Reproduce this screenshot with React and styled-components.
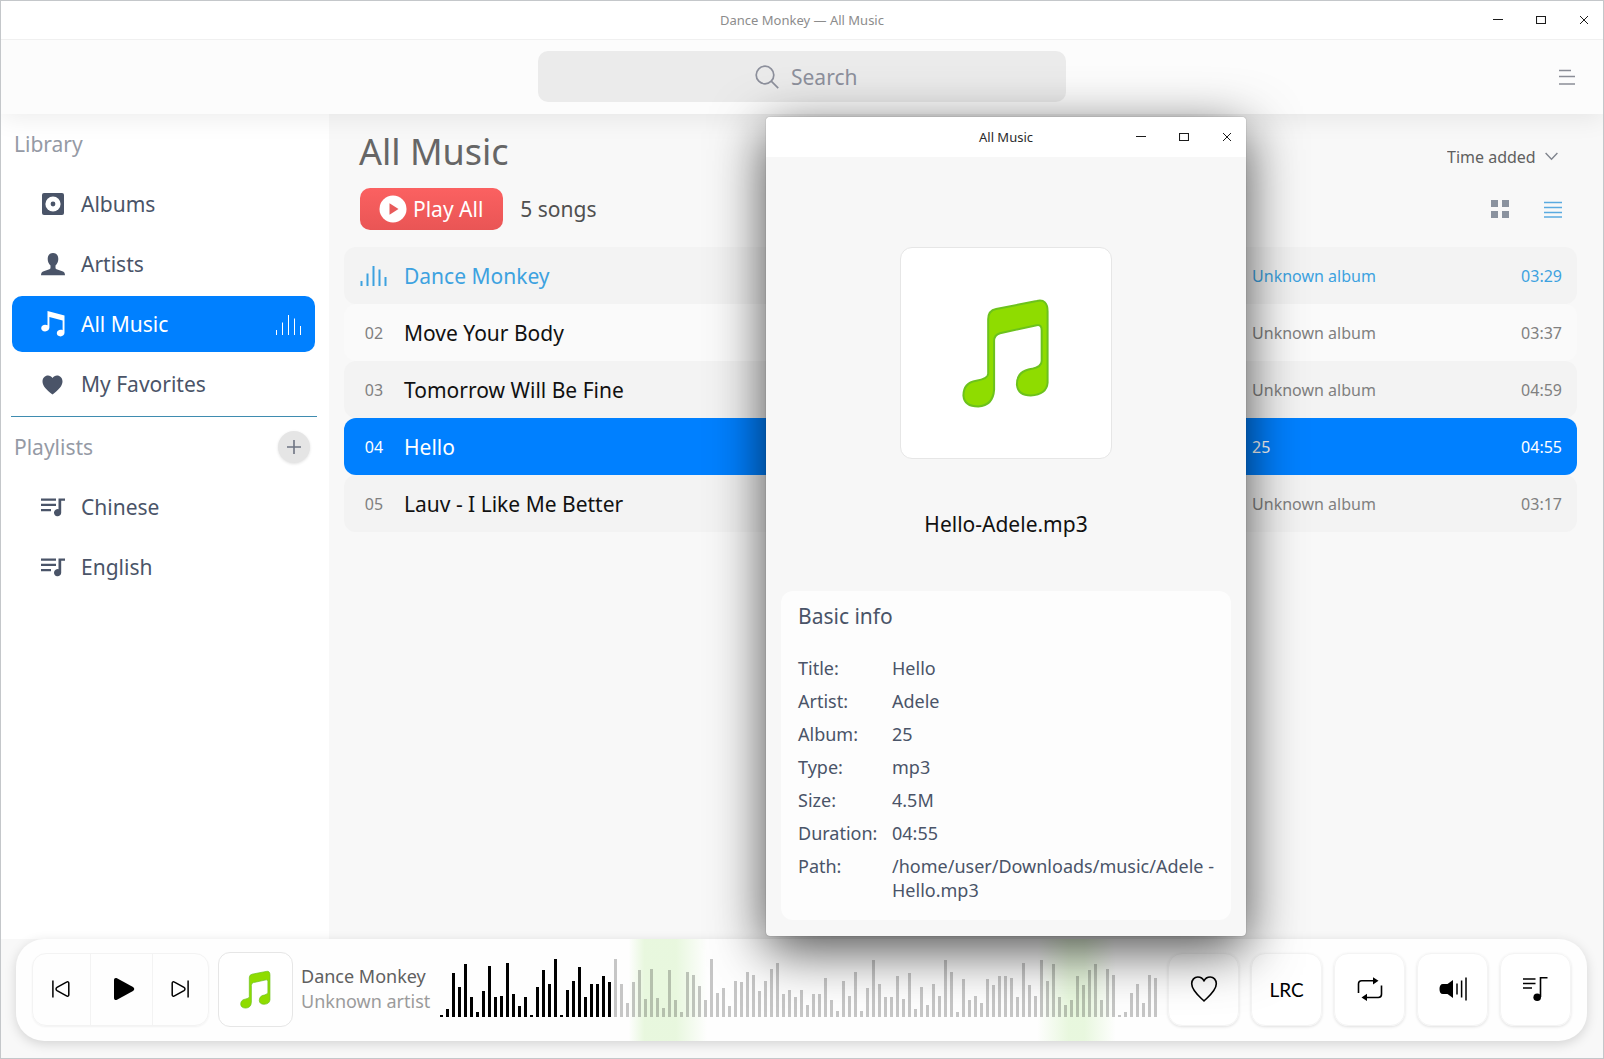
import React, { useState } from "react";
import styled, { createGlobalStyle, css } from "styled-components";

const GlobalStyle = createGlobalStyle`
  *, *::before, *::after { box-sizing: border-box; }
  body { margin: 0; background: #f8f8f8; }
  body, button, input, select { font-family: "Noto Sans", "Open Sans", sans-serif; }
  h1, h2, p, dl, dd, ul { margin: 0; padding: 0; font-weight: 400; }
  ul { list-style: none; }
  svg { display: block; flex: none; }
`;

const slate = "#4a5468";
const accent = "#0080ff";
const playing = "#3da2e0";

/* ---------- window ---------- */

const Window = styled.div`
  position: relative;
  display: flex;
  flex-direction: column;
  min-height: 100vh;
  border: 1px solid #c4c7ca;
  background: #f8f8f8;
`;

const TitleBar = styled.header`
  display: grid;
  grid-template-columns: 1fr auto 1fr;
  align-items: center;
  height: ${(p) => (p.$dialog ? 40 : 39)}px;
  padding-bottom: ${(p) => (p.$dialog ? 0 : 1)}px;
  background: #fff;
  border-bottom: 1px solid ${(p) => (p.$dialog ? "#fff" : "#f0f0f0")};
  border-radius: ${(p) => (p.$dialog ? "4px 4px 0 0" : "0")};
`;

const WindowTitle = styled.p`
  grid-column: 2;
  font-size: 13px;
  line-height: 20px;
  color: ${(p) => (p.$active ? "#2b2b2b" : "#8c8c8c")};
`;

const WindowControls = styled.div`
  display: flex;
  justify-content: flex-end;
  gap: 15px;
  padding-right: 5px;
`;

const PlainButton = styled.button`
  display: flex;
  align-items: center;
  justify-content: center;
  padding: 0;
  border: 0;
  background: none;
  color: inherit;
  cursor: pointer;
`;

const ControlButton = styled(PlainButton)`
  width: 28px;
  height: 28px;
  color: #1c1c1c;
`;

const Header = styled.div`
  position: relative;
  z-index: 1;
  display: grid;
  grid-template-columns: 1fr minmax(280px, 33%) 1fr;
  align-items: center;
  height: 74px;
  padding-bottom: 1px;
  background: #fcfcfc;
  box-shadow: 0 4px 26px rgba(0, 0, 0, 0.08);
  clip-path: inset(0 0 -40px 0);
`;

const SearchBox = styled.label`
  grid-column: 2;
  display: flex;
  align-items: center;
  justify-content: center;
  gap: 12px;
  height: 51px;
  padding-left: 18px;
  border-radius: 10px;
  background: #ebebeb;
  color: #8d909c;
`;

const SearchInput = styled.input`
  width: 76px;
  padding: 0;
  border: 0;
  outline: 0;
  background: transparent;
  font-size: 21px;
  line-height: 30px;
  color: ${slate};
  &::placeholder { color: #8d909c; opacity: 1; }
`;

const MenuButton = styled(PlainButton)`
  justify-self: end;
  width: 32px;
  height: 32px;
  margin-right: 20px;
  color: #8a8d96;
`;

const Body = styled.div`
  flex: 1;
  display: grid;
  grid-template-columns: 328px 1fr;
`;

/* ---------- sidebar ---------- */

const Sidebar = styled.nav`
  background: #fff;
`;

const SectionHead = styled.div`
  display: flex;
  align-items: center;
  justify-content: space-between;
  height: 62px;
  padding: 0 19px 2px 13px;
`;

const SectionLabel = styled.h2`
  font-size: 21px;
  line-height: 30px;
  color: #959aa5;
`;

const NavList = styled.ul`
  display: flex;
  flex-direction: column;
  gap: 4px;
  padding: 0 14px 4px 11px;
`;

const NavLink = styled.a`
  display: flex;
  align-items: center;
  gap: 16px;
  height: 56px;
  padding: 0 12px 0 29px;
  border-radius: 10px;
  font-size: 21px;
  line-height: 30px;
  text-decoration: none;
  color: ${(p) => (p.$active ? "#fff" : slate)};
  background: ${(p) => (p.$active ? accent : "transparent")};
`;

const NavText = styled.span`
  flex: 1;
`;

const Divider = styled.hr`
  height: 1px;
  margin: 0 12px 0 10px;
  border: 0;
  background: #3f8cb0;
`;

const AddButton = styled(PlainButton)`
  width: 32px;
  height: 32px;
  border-radius: 50%;
  background: #e5e5e5;
  color: #6e7482;
  box-shadow: 0 1px 3px rgba(0, 0, 0, 0.12);
`;

/* ---------- content ---------- */

const Content = styled.main`
  padding: 13px 26px 0 15px;
`;

const HeadRow = styled.div`
  display: flex;
  align-items: flex-start;
  justify-content: space-between;
  padding: 0 19px 0 15px;
`;

const ActionRow = styled.div`
  display: flex;
  align-items: center;
  gap: 17px;
  margin: 11px 0 17px;
  padding: 0 15px 0 16px;
`;

const PageTitle = styled.h1`
  font-size: 36px;
  line-height: 50px;
  color: #666;
`;

const SortBox = styled.div`
  display: flex;
  position: relative;
  margin-top: 13px;
  color: #80858e;
`;

const SortSelect = styled.select`
  appearance: none;
  height: 34px;
  padding: 0 22px 0 0;
  border: 0;
  background: transparent;
  font-size: 16px;
  color: #606060;
`;

const SortArrow = styled.span`
  position: absolute;
  right: 0;
  top: 12px;
  pointer-events: none;
`;

const PlayAll = styled(PlainButton)`
  gap: 6px;
  height: 42px;
  padding: 0 20px 0 19px;
  border-radius: 10px;
  background: linear-gradient(#fb6161, #e95555);
  font-size: 21px;
  color: #fff;
`;

const SongCount = styled.p`
  flex: 1;
  font-size: 21px;
  line-height: 30px;
  color: #505050;
`;

const ViewButton = styled(PlainButton)`
  height: 34px;
  margin-left: 18px;
  color: ${(p) => (p.$active ? "#5aaae0" : "#8a929e")};
`;

const SongTable = styled.table`
  width: 100%;
  table-layout: fixed;
  border-collapse: separate;
  border-spacing: 0;
`;

const Col = styled.col`
  width: ${(p) => p.$w};
`;

const Cell = styled.td`
  height: 57px;
  padding: 0;
  font-size: ${(p) => (p.$title ? 21 : 16)}px;
  text-align: ${(p) => p.$align || "left"};
  &:first-child { border-radius: 12px 0 0 12px; }
  &:last-child { padding-right: 15px; border-radius: 0 12px 12px 0; }
  svg { margin: 0 auto; }
`;

const SongRow = styled.tr`
  color: #808080;
  background: transparent;
  ${Cell} { background: #fafafa; }
  &:nth-child(odd) ${Cell} { background: #f3f3f3; }
  ${Cell}:nth-child(2) { color: #111; }
  ${(p) => p.$playing && css`
    &&, && ${Cell}:nth-child(2) { color: ${playing}; }
  `}
  ${(p) => p.$selected && css`
    &&, && ${Cell}:nth-child(2) { color: #fff; }
    && ${Cell} { background: ${accent}; }
  `}
`;

/* ---------- player ---------- */

const Player = styled.footer`
  display: flex;
  align-items: center;
  height: 102px;
  margin: 0 16px 17px 15px;
  padding: 0 16px 2px;
  border-radius: 28px;
  background:
    linear-gradient(90deg, transparent 39%, rgba(214, 242, 196, 0.55) 40%, rgba(214, 242, 196, 0.55) 42%, transparent 44%),
    linear-gradient(90deg, transparent 65%, rgba(214, 242, 196, 0.55) 67%, rgba(214, 242, 196, 0.55) 68%, transparent 70%),
    #fefefe;
  box-shadow: 0 3px 12px rgba(0, 0, 0, 0.15);
`;

const Transport = styled.div`
  display: grid;
  grid-template-columns: 1fr 62px 1fr;
  width: 177px;
  height: 73px;
  border: 1px solid #f3f3f3;
  border-radius: 14px;
  box-shadow: 0 1px 2px rgba(0, 0, 0, 0.05);
`;

const TransportButton = styled(PlainButton)`
  color: #000;
  & + & { border-left: 1px solid #f3f3f3; }
`;

const Cover = styled.div`
  flex: none;
  width: ${(p) => p.$size}px;
  height: ${(p) => p.$size}px;
  border: 1px solid #e6e6e6;
  border-radius: 12px;
  background: #fff;
  overflow: hidden;
`;

const PlayerCover = styled.div`
  margin: 0 8px 0 9px;
`;

const NowPlaying = styled.div`
  flex: none;
  width: 131px;
  margin-right: 8px;
  white-space: nowrap;
`;

const TrackText = styled.p`
  font-size: 18px;
  line-height: 25px;
  color: ${(p) => (p.$muted ? "#9b9b9b" : "#606060")};
`;

const Waveform = styled.label`
  position: relative;
  flex: 1;
  height: 58px;
  margin: 0 11px 2px 0;
`;

const SeekInput = styled.input`
  position: absolute;
  inset: 0;
  width: 100%;
  height: 100%;
  margin: 0;
  opacity: 0;
  cursor: pointer;
`;

const PlayerActions = styled.div`
  display: flex;
  gap: 12px;
`;

const ActionButton = styled(PlainButton)`
  width: 71px;
  height: 73px;
  border: 1px solid #f4f4f4;
  border-radius: 14px;
  background: rgba(255, 255, 255, 0.5);
  box-shadow: 0 1px 3px rgba(0, 0, 0, 0.12);
  font-family: Lato, "Noto Sans", sans-serif;
  font-size: 19px;
  color: #000;
`;

/* ---------- info dialog ---------- */

const Dialog = styled.section`
  position: absolute;
  z-index: 2;
  left: 765px;
  top: 116px;
  width: 480px;
  border-radius: 4px;
  background: #f7f7f7;
  box-shadow: 0 0 1px rgba(0, 0, 0, 0.5), 0 14px 54px rgba(0, 0, 0, 0.7);
`;

const DialogBody = styled.div`
  display: flex;
  flex-direction: column;
  align-items: center;
  padding: 90px 15px 16px;
`;

const FileName = styled.p`
  margin: 50px 0 52px;
  font-size: 21px;
  line-height: 30px;
  color: #111;
`;

const InfoCard = styled.div`
  width: 100%;
  padding: 10px 12px 18px 17px;
  border-radius: 12px;
  background: #fdfdfd;
  color: ${slate};
`;

const InfoTitle = styled.h2`
  font-size: 21px;
  line-height: 30px;
`;

const InfoList = styled.dl`
  display: grid;
  grid-template-columns: 94px 1fr;
  row-gap: 9px;
  margin-top: 25px;
  font-size: 18px;
  line-height: 24px;
`;

/* ---------- drawings ---------- */

const MinimizeIcon = () => (
  <svg width="10" height="10" viewBox="0 0 10 10"><path d="M0 4.5h10" stroke="currentColor" /></svg>
);
const MaximizeIcon = () => (
  <svg width="10" height="10" viewBox="0 0 10 10"><path d="M.5 1.500h9v7h-9z" fill="none" stroke="currentColor" strokeWidth="1.1" /></svg>
);
const CloseIcon = () => (
  <svg width="10" height="10" viewBox="0 0 10 10"><path d="M1 1l8 8M9 1l-8 8" stroke="currentColor" /></svg>
);
const SearchIcon = () => (
  <svg width="24" height="24" viewBox="0 0 24 24" fill="none" stroke="currentColor" strokeWidth="1.7">
    <circle cx="10" cy="10" r="8.8" /><path d="M16.2 16.2l7 7" />
  </svg>
);
const MenuIcon = () => (
  <svg width="16" height="16" viewBox="0 0 16 16" stroke="currentColor" strokeWidth="1.5">
    <path d="M0 1.5h12M0 7.5h16M0 15h16" />
  </svg>
);
const AlbumIcon = () => (
  <svg width="24" height="24" viewBox="0 0 24 24">
    <rect x="1" y="1" width="22" height="22" rx="2" fill="currentColor" />
    <circle cx="12" cy="12" r="7.6" fill="#fff" /><circle cx="12" cy="12" r="2.4" fill="currentColor" />
  </svg>
);
const ArtistIcon = () => (
  <svg width="24" height="24" viewBox="0 0 24 24" fill="currentColor">
    <path d="M12 1c3.600 0 5.300 2.600 5.300 6 0 2.700-1.200 5.200-2.800 6.600v2.200c0 1 .6 1.300 1.800 1.700l5 1.700c1.700.6 2.700 1.600 2.700 4.100H0c0-2.500 1-3.500 2.700-4.100l5-1.700c1.200-.4 1.800-.7 1.800-1.700v-2.200C7.900 12.200 6.700 9.700 6.700 7c0-3.400 1.700-6 5.300-6z" />
  </svg>
);
const MusicIcon = () => (
  <svg width="24" height="26" viewBox="0 0 24 26" fill="currentColor">
    <path d="M6.500 0l17 4.600v17.200c0 2-1.700 3.600-4 3.600-2.100 0-3.700-1.300-3.700-3.100 0-2 1.800-3.500 4-3.500.7 0 1.300.1 1.800.4V9.500L8.400 6v10.500c0 2.200-1.800 3.900-4.300 3.900C1.800 20.400.2 19 .2 17.200c0-2 1.700-3.500 4-3.500.9 0 1.600.2 2.300.6z" />
  </svg>
);
const HeartIcon = () => (
  <svg width="24" height="24" viewBox="0 0 24 24" fill="currentColor">
    <path d="M11.500 22.500C5 17.500 1.500 14 1.500 9.300 1.500 5.800 4 3.400 7 3.400c1.900 0 3.500 1 4.500 2.600 1-1.600 2.600-2.600 4.500-2.600 3 0 5.500 2.400 5.500 5.900 0 4.700-3.500 8.200-10 13.200z" />
  </svg>
);
const PlaylistIcon = () => (
  <svg width="24" height="24" viewBox="0 0 24 24" fill="currentColor">
    <path d="M0 3.500h15v2.300H0zM0 8.700h15V11H0zM0 14h10v2.300H0zM17.500 3.500H24v2.300h-3.800v11.900a3.600 3.600 0 1 1-2.700-3.500z" />
  </svg>
);
const PlusIcon = () => (
  <svg width="14" height="14" viewBox="0 0 14 14" stroke="currentColor" strokeWidth="1.6"><path d="M7 0v14M0 7h14" /></svg>
);
const LevelsIcon = ({ weight = 2 }) => (
  <svg width="28" height="21" viewBox="0 0 28 21" stroke="currentColor" strokeWidth={weight}>
    <path d="M1.500 16v5M7.500 8.500V21M13.500 1v20M19.500 4.500V21M25.500 12v9" />
  </svg>
);
const ChevronIcon = () => (
  <svg width="13" height="9" viewBox="0 0 13 9" fill="none" stroke="currentColor" strokeWidth="1.4"><path d="M.6 1l5.900 6.200L12.400 1" /></svg>
);
const PlayBadge = () => (
  <svg width="28" height="28" viewBox="0 0 28 28"><circle cx="14" cy="14" r="13.500" fill="#fff" /><path d="M10.500 8.300v11.400l9-5.700z" fill="#e85a5a" /></svg>
);
const GridIcon = () => (
  <svg width="18" height="18" viewBox="0 0 18 18" fill="currentColor"><path d="M0 0h7v7H0zM11 0h7v7h-7zM0 11h7v7H0zM11 11h7v7h-7z" /></svg>
);
const ListIcon = () => (
  <svg width="18" height="18" viewBox="0 0 18 18" stroke="currentColor" strokeWidth="1.600"><path d="M0 2.500h18M0 7.500h18M0 12.500h18M0 17h18" /></svg>
);
const PrevIcon = () => (
  <svg width="18" height="18" viewBox="0 0 18 18" fill="none" stroke="currentColor" strokeWidth="1.5">
    <path d="M.9.5v17M16.800 3.200v11.600c0 1.300-1.200 1.800-2.300 1.100L5 10.600c-1.300-.8-1.300-2.400 0-3.200l9.500-5.300c1.100-.7 2.300-.2 2.300 1.100z" />
  </svg>
);
const NextIcon = () => (
  <svg width="18" height="18" viewBox="0 0 18 18" fill="none" stroke="currentColor" strokeWidth="1.5">
    <path d="M17.100.5v17M1.200 3.200v11.600c0 1.300 1.200 1.800 2.300 1.100L13 10.600c1.300-.8 1.300-2.400 0-3.200L3.500 2.100C2.400 1.400 1.200 1.900 1.200 3.200z" />
  </svg>
);
const PlayIcon = () => (
  <svg width="28" height="24" viewBox="0 0 28 24"><path d="M7 3v18c0 1.800 1.500 2.500 3 1.700l16-8.600c1.700-1 1.700-3 0-4L10 1.300C8.500.5 7 1.200 7 3z" fill="currentColor" /></svg>
);
const LikeIcon = () => (
  <svg width="28" height="28" viewBox="0 0 28 28" fill="none" stroke="currentColor" strokeWidth="1.6" strokeLinejoin="round">
    <path d="M14 26C10 22 1.700 15.800 1.700 8.800 1.700 4.800 4.400 2 7.800 2 10.500 2 12.800 3.300 14 6c1.200-2.700 3.500-4 6.200-4 3.400 0 6.100 2.800 6.100 6.800C26.300 15.800 18 22 14 26z" />
  </svg>
);
const RepeatIcon = () => (
  <svg width="26" height="24" viewBox="0 0 26 24" fill="none" stroke="currentColor" strokeWidth="1.6">
    <path d="M1.500 16V7c0-2 1-3.200 3.200-3.200H18M24.500 8.500v8.800c0 2-1 3.200-3.200 3.200H8" />
    <path d="M16 .2v7.200l5.500-3.600zM10 16.800V24l-5.500-3.500z" fill="currentColor" stroke="none" />
  </svg>
);
const VolumeIcon = () => (
  <svg width="28" height="24" viewBox="0 0 28 24" stroke="currentColor" strokeWidth="1.500">
    <path d="M4 7h4.500L14 3v18l-5.500-4H4C1.500 17 .5 15 .5 12S1.500 7 4 7z" fill="currentColor" stroke="none" />
    <path d="M18 6.500v11M22.600 3.500v17M27 .5v23" />
  </svg>
);
const QueueIcon = () => (
  <svg width="26" height="26" viewBox="0 0 26 26" fill="none" stroke="currentColor" strokeWidth="1.6">
    <path d="M0 3h12.500M0 7.500h12.500M0 12h9M17.500 21V1.800H24.500" /><circle cx="14.200" cy="21.300" r="3.800" fill="currentColor" stroke="none" />
  </svg>
);
const GreenNote = () => (
  <svg width="100%" height="100%" viewBox="0 0 212 212">
    <path
      d="M88 72Q88 63 96 61.500L137 53.500Q148 51 148 64V136Q147 148 131 149Q118 149 117 138Q117 124 132 122Q142 120 142 114V83Q142 77 137 78L100 86Q94 87.500 94 94V143Q93 159 78 160Q64 160 63 149Q63 136 76 134Q88 132 88 127Z"
      fill="#8fdc00" stroke="#6cc21c" strokeWidth="2" strokeLinejoin="round"
    />
  </svg>
);

/* ---------- data ---------- */

const peaks = [
  2, 8, 44, 30, 53, 20, 5, 26, 51, 20, 21, 54, 23, 11, 20, 2, 30, 47, 33, 58, 2, 27, 36, 50, 20, 33, 33, 41, 35,
  58, 33, 14, 35, 47, 18, 48, 19, 9, 47, 17, 5, 45, 42, 31, 17, 58, 24, 29, 11, 36, 35, 45, 42, 26, 36, 48, 54,
  23, 27, 20, 27, 12, 23, 23, 39, 17, 6, 36, 21, 45, 6, 29, 57, 33, 20, 20, 41, 18, 44, 8, 30, 12, 33, 21, 57,
  45, 5, 38, 17, 21, 14, 38, 32, 41, 41, 39, 20, 54, 32, 21, 57, 36, 53, 20, 12, 17, 41, 32, 47, 53, 17, 48, 42,
  2, 5, 24, 33, 14, 42, 39,
];

const library = [
  { name: "Albums", icon: AlbumIcon },
  { name: "Artists", icon: ArtistIcon },
  { name: "All Music", icon: MusicIcon, active: true },
  { name: "My Favorites", icon: HeartIcon },
];

const playlists = [
  { name: "Chinese", icon: PlaylistIcon },
  { name: "English", icon: PlaylistIcon },
];

const songs = [
  { title: "Dance Monkey", album: "Unknown album", time: "03:29" },
  { title: "Move Your Body", album: "Unknown album", time: "03:37" },
  { title: "Tomorrow Will Be Fine", album: "Unknown album", time: "04:59" },
  { title: "Hello", album: "25", time: "04:55" },
  { title: "Lauv - I Like Me Better", album: "Unknown album", time: "03:17" },
];

const info = [
  ["Title:", "Hello"],
  ["Artist:", "Adele"],
  ["Album:", "25"],
  ["Type:", "mp3"],
  ["Size:", "4.5M"],
  ["Duration:", "04:55"],
  ["Path:", "/home/user/Downloads/music/Adele - Hello.mp3"],
];

/* ---------- components ---------- */

const Controls = () => (
  <WindowControls>
    <ControlButton aria-label="Minimize"><MinimizeIcon /></ControlButton>
    <ControlButton aria-label="Maximize"><MaximizeIcon /></ControlButton>
    <ControlButton aria-label="Close"><CloseIcon /></ControlButton>
  </WindowControls>
);

const Nav = ({ items }) => (
  <NavList>
    {items.map(({ name, icon: Icon, active }) => (
      <li key={name}>
        <NavLink href="#" $active={active}>
          <Icon />
          <NavText>{name}</NavText>
          {active && <LevelsIcon weight={1} />}
        </NavLink>
      </li>
    ))}
  </NavList>
);

const Seek = () => {
  const [position, setPosition] = useState(29);
  return (
    <Waveform>
      <svg width="100%" height="58" viewBox={`0 0 ${peaks.length * 6 - 3} 58`} preserveAspectRatio="none">
        {peaks.map((h, i) => (
          <rect key={i} x={i * 6} y={58 - h} width="3" height={h} fill={i < position ? "#000" : "rgba(0, 0, 0, 0.22)"} />
        ))}
      </svg>
      <SeekInput
        type="range" aria-label="Position" min="0" max={peaks.length}
        value={position} onChange={(e) => setPosition(Number(e.target.value))}
      />
    </Waveform>
  );
};

const SongInfo = () => (
  <Dialog role="dialog" aria-label="All Music">
    <TitleBar $dialog>
      <WindowTitle $active>All Music</WindowTitle>
      <Controls />
    </TitleBar>
    <DialogBody>
      <Cover $size={212}><GreenNote /></Cover>
      <FileName>Hello-Adele.mp3</FileName>
      <InfoCard>
        <InfoTitle>Basic info</InfoTitle>
        <InfoList>
          {info.map(([term, value]) => (
            <React.Fragment key={term}>
              <dt>{term}</dt>
              <dd>{value}</dd>
            </React.Fragment>
          ))}
        </InfoList>
      </InfoCard>
    </DialogBody>
  </Dialog>
);

export default function App() {
  return (
    <Window>
      <GlobalStyle />
      <TitleBar>
        <WindowTitle>Dance Monkey — All Music</WindowTitle>
        <Controls />
      </TitleBar>
      <Header>
        <SearchBox>
          <SearchIcon />
          <SearchInput type="text" placeholder="Search" aria-label="Search" />
        </SearchBox>
        <MenuButton aria-label="Menu"><MenuIcon /></MenuButton>
      </Header>

      <Body>
        <Sidebar>
          <SectionHead><SectionLabel>Library</SectionLabel></SectionHead>
          <Nav items={library} />
          <Divider />
          <SectionHead>
            <SectionLabel>Playlists</SectionLabel>
            <AddButton aria-label="New playlist"><PlusIcon /></AddButton>
          </SectionHead>
          <Nav items={playlists} />
        </Sidebar>

        <Content>
          <HeadRow>
            <PageTitle>All Music</PageTitle>
            <SortBox>
              <SortSelect aria-label="Sort by"><option>Time added</option></SortSelect>
              <SortArrow><ChevronIcon /></SortArrow>
            </SortBox>
          </HeadRow>
          <ActionRow>
            <PlayAll><PlayBadge />Play All</PlayAll>
            <SongCount>5 songs</SongCount>
            <ViewButton aria-label="Grid view"><GridIcon /></ViewButton>
            <ViewButton aria-label="List view" $active><ListIcon /></ViewButton>
          </ActionRow>
          <SongTable>
            <colgroup>
              <Col $w="60px" /><Col /><Col $w="18%" /><Col $w="103px" />
            </colgroup>
            <tbody>
              {songs.map((song, i) => (
                <SongRow key={song.title} $playing={i === 0} $selected={i === 3}>
                  <Cell $align="center">{i === 0 ? <LevelsIcon /> : `0${i + 1}`}</Cell>
                  <Cell $title>{song.title}</Cell>
                  <Cell>{song.album}</Cell>
                  <Cell $align="right">{song.time}</Cell>
                </SongRow>
              ))}
            </tbody>
          </SongTable>
        </Content>
      </Body>

      <Player>
        <Transport>
          <TransportButton aria-label="Previous"><PrevIcon /></TransportButton>
          <TransportButton aria-label="Play"><PlayIcon /></TransportButton>
          <TransportButton aria-label="Next"><NextIcon /></TransportButton>
        </Transport>
        <PlayerCover><Cover $size={75}><GreenNote /></Cover></PlayerCover>
        <NowPlaying>
          <TrackText>Dance Monkey</TrackText>
          <TrackText $muted>Unknown artist</TrackText>
        </NowPlaying>
        <Seek />
        <PlayerActions>
          <ActionButton aria-label="Favorite"><LikeIcon /></ActionButton>
          <ActionButton>LRC</ActionButton>
          <ActionButton aria-label="Repeat"><RepeatIcon /></ActionButton>
          <ActionButton aria-label="Volume"><VolumeIcon /></ActionButton>
          <ActionButton aria-label="Play queue"><QueueIcon /></ActionButton>
        </PlayerActions>
      </Player>

      <SongInfo />
    </Window>
  );
}
